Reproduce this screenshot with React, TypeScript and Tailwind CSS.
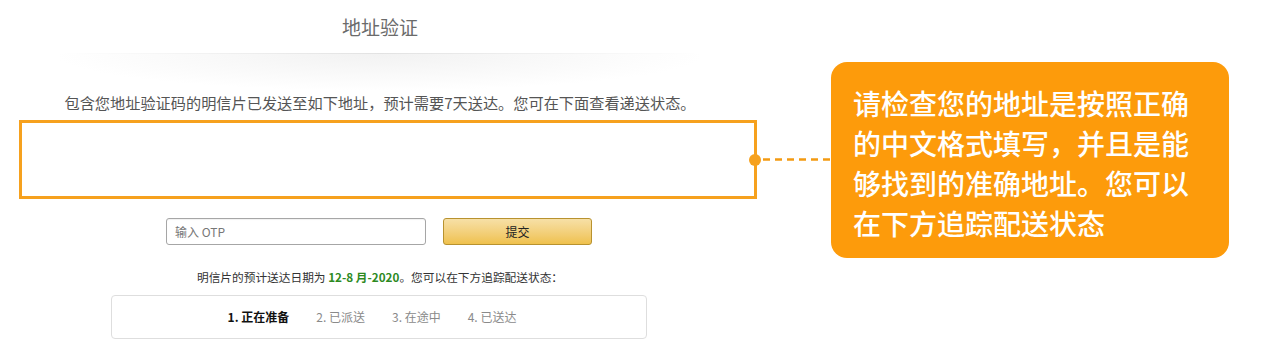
const steps = [
  { label: '1. 正在准备', active: true },
  { label: '2. 已派送', active: false },
  { label: '3. 在途中', active: false },
  { label: '4. 已送达', active: false },
]

function AddressPanel() {
  return (
    <div className="flex w-[760px] shrink-0 flex-col font-['Noto_Sans_CJK_SC','Noto_Sans',sans-serif]">
      <div className="flex h-[53px] items-center justify-center pt-[2px] text-[19px] text-[#6b6b6b]">
        地址验证
      </div>
      <div className="mx-[60px] h-px bg-gradient-to-r from-transparent via-[#e2e2e2] to-transparent" />
      <div className="mx-[60px] h-[36px] bg-[radial-gradient(ellipse_at_top,#f2f2f2,rgba(255,255,255,0)_72%)]" />

      <p className="h-[24px] text-center text-[15.2px] leading-[24px] text-[#555]">
        包含您地址验证码的明信片已发送至如下地址，预计需要7天送达。您可在下面查看递送状态。
      </p>

      <div className="relative ml-[19px] mr-[3px] mt-[6px] h-[79px] border-[3px] border-[#f6a11e] bg-white">
        <div className="absolute left-[calc(100%-5px)] top-1/2 flex -translate-y-1/2 items-center">
          <div className="h-[12px] w-[12px] rounded-full bg-[#f6a11e]" />
          <svg className="h-[3px] w-[71px]" viewBox="0 0 71 3">
            <line x1="2" y1="1.5" x2="71" y2="1.5" stroke="#f39a12" strokeWidth="2.5" strokeDasharray="7 5" />
          </svg>
        </div>
      </div>

      <div className="mt-[19px] flex justify-center gap-[17px] pr-[2px]">
        <input
          className="h-[27px] w-[260px] rounded-[3px] border border-[#a6a6a6] px-[8px] text-[12px] text-[#333] shadow-[inset_0_1px_1px_rgba(0,0,0,0.06)] outline-none placeholder:text-[#777]"
          placeholder="输入 OTP"
          type="text"
        />
        <button
          className="h-[27px] w-[149px] rounded-[3px] border border-[#b8922f] bg-gradient-to-b from-[#f7e0a6] to-[#efc14c] text-[12px] text-[#222]"
          type="button"
        >
          提交
        </button>
      </div>

      <p className="mt-[22px] h-[20px] text-center text-[11.7px] leading-[20px] text-[#333]">
        明信片的预计送达日期为 <span className="font-bold text-[#2d8a1f]">12-8 月-2020</span>。您可以在下方追踪配送状态：
      </p>

      <div className="ml-[111px] mr-[113px] mt-[8px] flex h-[44px] items-center justify-center gap-[27px] rounded-[4px] border border-[#dedede] pr-[14px] text-[12px]">
        {steps.map((step) => (
          <span
            className={step.active ? 'font-bold text-[#111]' : 'text-[#8a8a8a]'}
            key={step.label}
          >
            {step.label}
          </span>
        ))}
      </div>
    </div>
  )
}

export default function App() {
  return (
    <div className="flex h-[347px] w-[1265px] overflow-hidden bg-white">
      <AddressPanel />
      <div className="pl-[71px] pt-[62px]">
        <div className="h-[196px] w-[398px] rounded-[16px] bg-[#fd9b0b] pl-[22px] pt-[21px] font-['Noto_Sans_CJK_SC','Noto_Sans',sans-serif] text-[28px] font-medium leading-[40px] text-white">
          请检查您的地址是按照正确
          <br />
          的中文格式填写，并且是能
          <br />
          够找到的准确地址。您可以
          <br />
          在下方追踪配送状态
        </div>
      </div>
    </div>
  )
}
